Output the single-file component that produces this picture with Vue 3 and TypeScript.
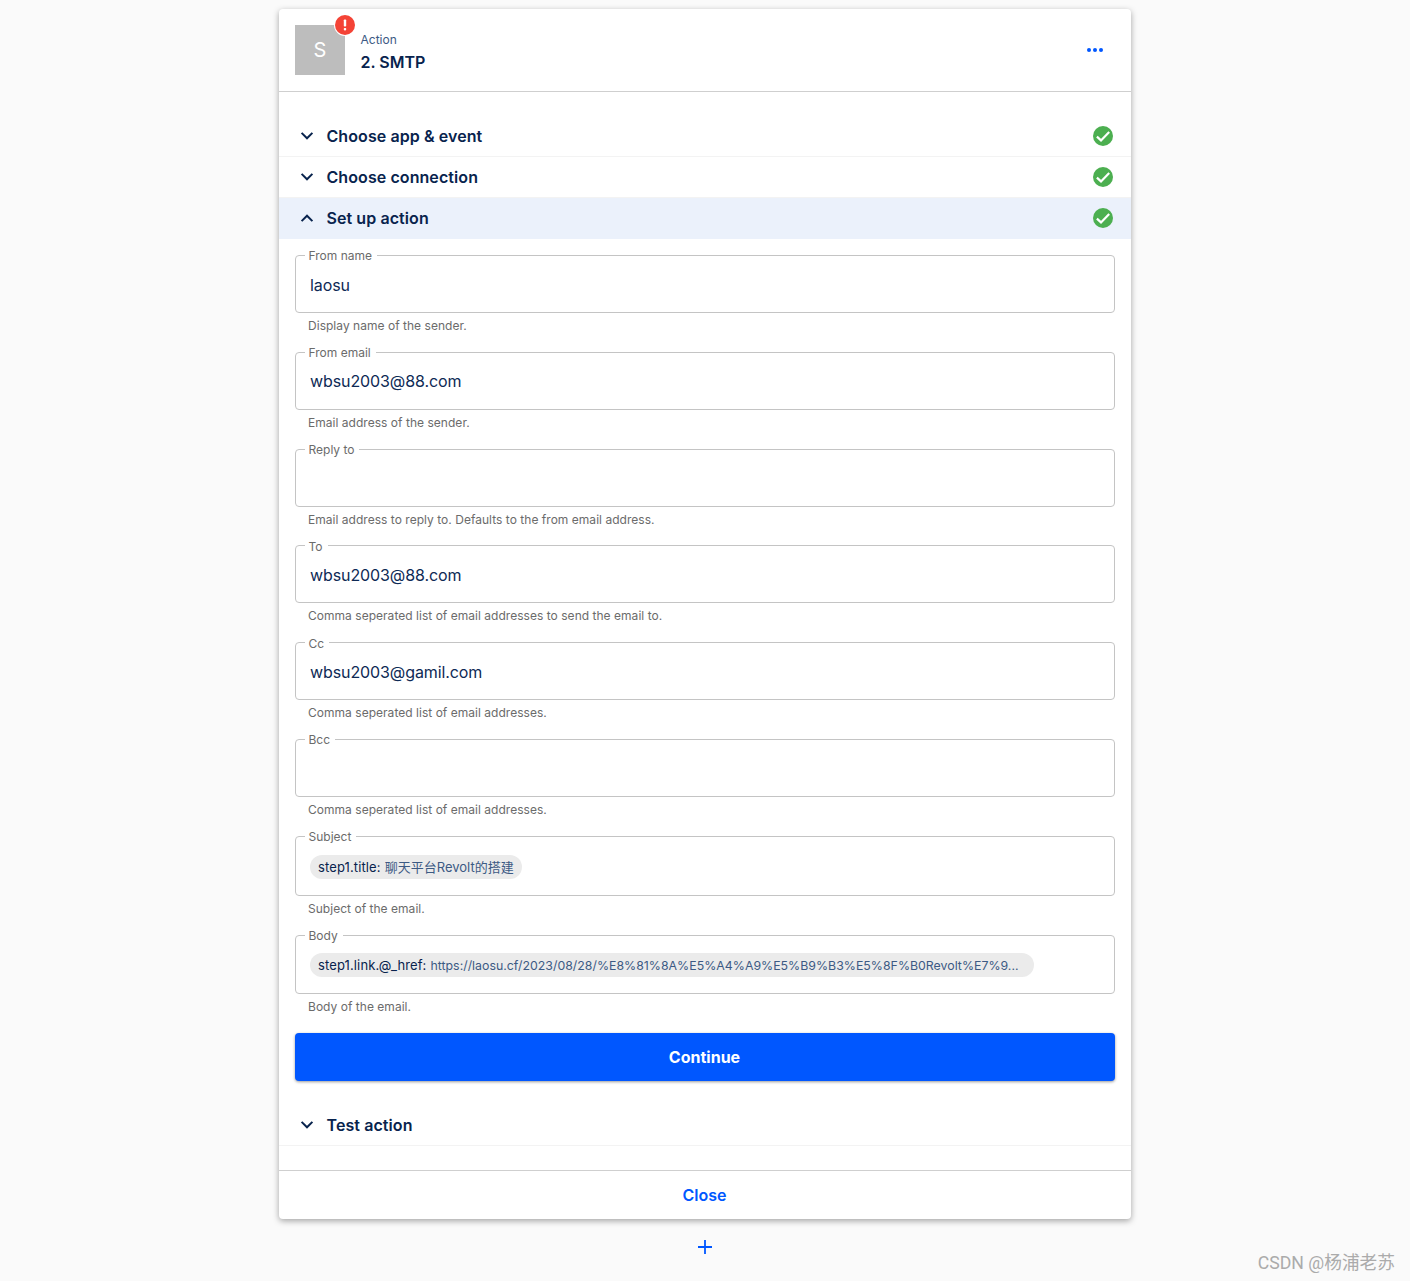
<script setup lang="ts">
interface Chip {
  key: string
  value: string
  long?: boolean
}

interface Field {
  label: string
  help: string
  value?: string
  chip?: Chip
}

const topSections = [
  { title: 'Choose app & event', open: false },
  { title: 'Choose connection', open: false },
  { title: 'Set up action', open: true },
]

const fields: Field[] = [
  { label: 'From name', value: 'laosu', help: 'Display name of the sender.' },
  { label: 'From email', value: 'wbsu2003@88.com', help: 'Email address of the sender.' },
  { label: 'Reply to', help: 'Email address to reply to. Defaults to the from email address.' },
  { label: 'To', value: 'wbsu2003@88.com', help: 'Comma seperated list of email addresses to send the email to.' },
  { label: 'Cc', value: 'wbsu2003@gamil.com', help: 'Comma seperated list of email addresses.' },
  { label: 'Bcc', help: 'Comma seperated list of email addresses.' },
  {
    label: 'Subject',
    chip: { key: 'step1.title:', value: '聊天平台Revolt的搭建' },
    help: 'Subject of the email.',
  },
  {
    label: 'Body',
    chip: {
      key: 'step1.link.@_href:',
      value: 'https://laosu.cf/2023/08/28/%E8%81%8A%E5%A4%A9%E5%B9%B3%E5%8F%B0Revolt%E7%9...',
      long: true,
    },
    help: 'Body of the email.',
  },
]
</script>

<template>
  <div class="page">
    <div class="card">
      <header class="head">
        <div class="avatar">
          S
          <span class="badge">
            <svg width="22" height="22" viewBox="0 0 22 22">
              <circle cx="11" cy="11" r="11" fill="#fff" />
              <circle cx="11" cy="11" r="10" fill="#f44336" />
              <rect x="9.8" y="5.5" width="2.4" height="7" rx="0.8" fill="#fff" />
              <rect x="9.8" y="14" width="2.4" height="2.4" rx="0.8" fill="#fff" />
            </svg>
          </span>
        </div>
        <div class="head-text">
          <div class="kind">Action</div>
          <div class="name">2. SMTP</div>
        </div>
        <svg class="dots" width="18" height="6" viewBox="0 0 18 6">
          <circle cx="3" cy="3" r="2" fill="#0057ff" />
          <circle cx="9" cy="3" r="2" fill="#0057ff" />
          <circle cx="15" cy="3" r="2" fill="#0057ff" />
        </svg>
      </header>

      <div class="sections">
        <div
          v-for="s in topSections"
          :key="s.title"
          class="section"
          :class="{ active: s.open }"
        >
          <svg class="chevron" :class="{ up: s.open }" width="14" height="10" viewBox="0 0 14 10">
            <path d="M1.6 1.9 7 7.3 12.4 1.9" fill="none" stroke="#08234d" stroke-width="2" />
          </svg>
          <span class="section-title">{{ s.title }}</span>
          <svg class="check" width="20" height="20" viewBox="0 0 20 20">
            <circle cx="10" cy="10" r="10" fill="#4caf50" />
            <path d="M3.9 10.6 8 14.4 16.2 5.9" fill="none" stroke="#fff" stroke-width="2.2" />
          </svg>
        </div>
      </div>

      <div class="form">
        <div v-for="f in fields" :key="f.label" class="field">
          <fieldset class="box" :class="{ 'has-chip': f.chip }">
            <legend>{{ f.label }}</legend>
            <span v-if="f.value" class="value">{{ f.value }}</span>
            <span v-if="f.chip" class="chip" :class="{ long: f.chip.long }">
              <span class="chip-key">{{ f.chip.key }}</span>
              <span class="chip-value">{{ f.chip.value }}</span>
            </span>
          </fieldset>
          <div class="help">{{ f.help }}</div>
        </div>
        <button class="continue" type="button">Continue</button>
      </div>

      <div class="section test">
        <svg class="chevron" width="14" height="10" viewBox="0 0 14 10">
          <path d="M1.6 1.9 7 7.3 12.4 1.9" fill="none" stroke="#08234d" stroke-width="2" />
        </svg>
        <span class="section-title">Test action</span>
      </div>

      <footer class="foot">Close</footer>
    </div>

    <svg class="plus" width="16" height="16" viewBox="0 0 16 16">
      <path d="M8 1V15M1 8H15" stroke="#0057ff" stroke-width="1.8" fill="none" />
    </svg>

    <div class="watermark">CSDN @杨浦老苏</div>
  </div>
</template>

<style>
html,
body {
  margin: 0;
  background: #fafafa;
}
</style>

<style scoped>
.page {
  position: relative;
  height: 1281px;
  overflow: hidden;
  padding-top: 9px;
  box-sizing: border-box;
  background: #fafafa;
  font-family: Inter, "Noto Sans CJK SC", sans-serif;
  color: #08234d;
  display: flex;
  flex-direction: column;
  align-items: center;
}

.card {
  width: 852px;
  height: 1210px;
  background: #fff;
  border-radius: 4px;
  box-shadow: 0 2px 6px rgba(0, 0, 0, 0.35);
  display: flex;
  flex-direction: column;
}

.head {
  height: 83px;
  box-sizing: border-box;
  padding: 16px 27px 0 16px;
  border-bottom: 1px solid #cfcfcf;
  display: flex;
  align-items: flex-start;
}

.avatar {
  position: relative;
  width: 50px;
  height: 50px;
  background: #bdbdbd;
  color: #fff;
  font-size: 20px;
  line-height: 50px;
  text-align: center;
}

.badge {
  position: absolute;
  top: -11px;
  right: -11px;
  width: 22px;
  height: 22px;
}

.badge svg {
  display: block;
}

.head-text {
  margin-left: 15.5px;
  margin-top: 7px;
  flex: 1;
}

.kind {
  font-size: 12px;
  line-height: 16px;
  color: #3c5a84;
}

.name {
  font-size: 16px;
  font-weight: 600;
  line-height: 24px;
  margin-top: 2px;
}

.dots {
  margin-top: 22px;
}

.sections {
  padding-top: 24px;
}

.section {
  height: 41px;
  box-sizing: border-box;
  border-bottom: 1px solid #f3f3f3;
  padding: 0 18px 0 21px;
  display: flex;
  align-items: center;
}

.section.active {
  background: #ebf1fb;
  border-bottom: 0;
  padding-bottom: 1px;
}

.chevron.up {
  transform: rotate(180deg);
}

.section-title {
  margin-left: 12.5px;
  flex: 1;
  font-size: 16px;
  font-weight: 600;
  letter-spacing: 0.08px;
}

.form {
  padding: 9.45px 16px 0;
}

.field {
  height: 96.8px;
}

.field:nth-child(n + 7) {
  height: 99px;
}

.box {
  margin: 0;
  padding: 0 14px;
  min-width: 0;
  height: 64.5px;
  box-sizing: border-box;
  border: 1px solid #c4c4c4;
  border-radius: 4px;
  display: flex;
  align-items: center;
}

.box.has-chip {
  height: 66.5px;
  align-items: flex-start;
}

.field:last-of-type .box {
  height: 65.5px;
}

legend {
  margin-left: -5.5px;
  padding: 2px 5px 0 4px;
  font-size: 12px;
  line-height: 12px;
  color: #6b6b6b;
}

.value {
  font-size: 16px;
  line-height: 20px;
  margin-top: -5px;
  letter-spacing: -0.1px;
  color: #0e2a55;
}

.chip {
  display: inline-block;
  box-sizing: border-box;
  margin-top: 12px;
  height: 24px;
  padding: 0 8px;
  border-radius: 12px;
  background: #ebebeb;
  font-size: 13px;
  line-height: 24px;
  white-space: nowrap;
}

.chip.long {
  width: 724px;
  margin-top: 11px;
}

.chip.long .chip-value {
  font-size: 12.35px;
}

.chip-key {
  letter-spacing: 0.12px;
}

.chip-value {
  margin-left: 4px;
  color: #3c5a84;
}

.help {
  margin-top: 5px;
  padding-left: 13px;
  font-size: 12px;
  line-height: 16px;
  letter-spacing: 0.03px;
  color: #6b6b6b;
}

.continue {
  display: block;
  width: 100%;
  height: 48px;
  margin-top: 6px;
  padding: 0 1px 0 0;
  border: 0;
  border-radius: 4px;
  background: #0057ff;
  box-shadow: 0 1px 3px rgba(0, 0, 0, 0.4);
  color: #fff;
  font-family: inherit;
  font-size: 16px;
  font-weight: 700;
}

.test {
  margin-top: 24px;
}

.foot {
  margin-top: auto;
  height: 49px;
  box-sizing: border-box;
  padding-right: 1px;
  border-top: 1px solid #cfcfcf;
  color: #0057ff;
  font-size: 16px;
  font-weight: 600;
  line-height: 48px;
  text-align: center;
}

.plus {
  margin-top: 20px;
}

.watermark {
  position: absolute;
  right: 15px;
  bottom: 7px;
  font-family: Roboto, "Noto Sans CJK SC", sans-serif;
  font-size: 17.7px;
  line-height: 22px;
  color: #ababab;
}
</style>
